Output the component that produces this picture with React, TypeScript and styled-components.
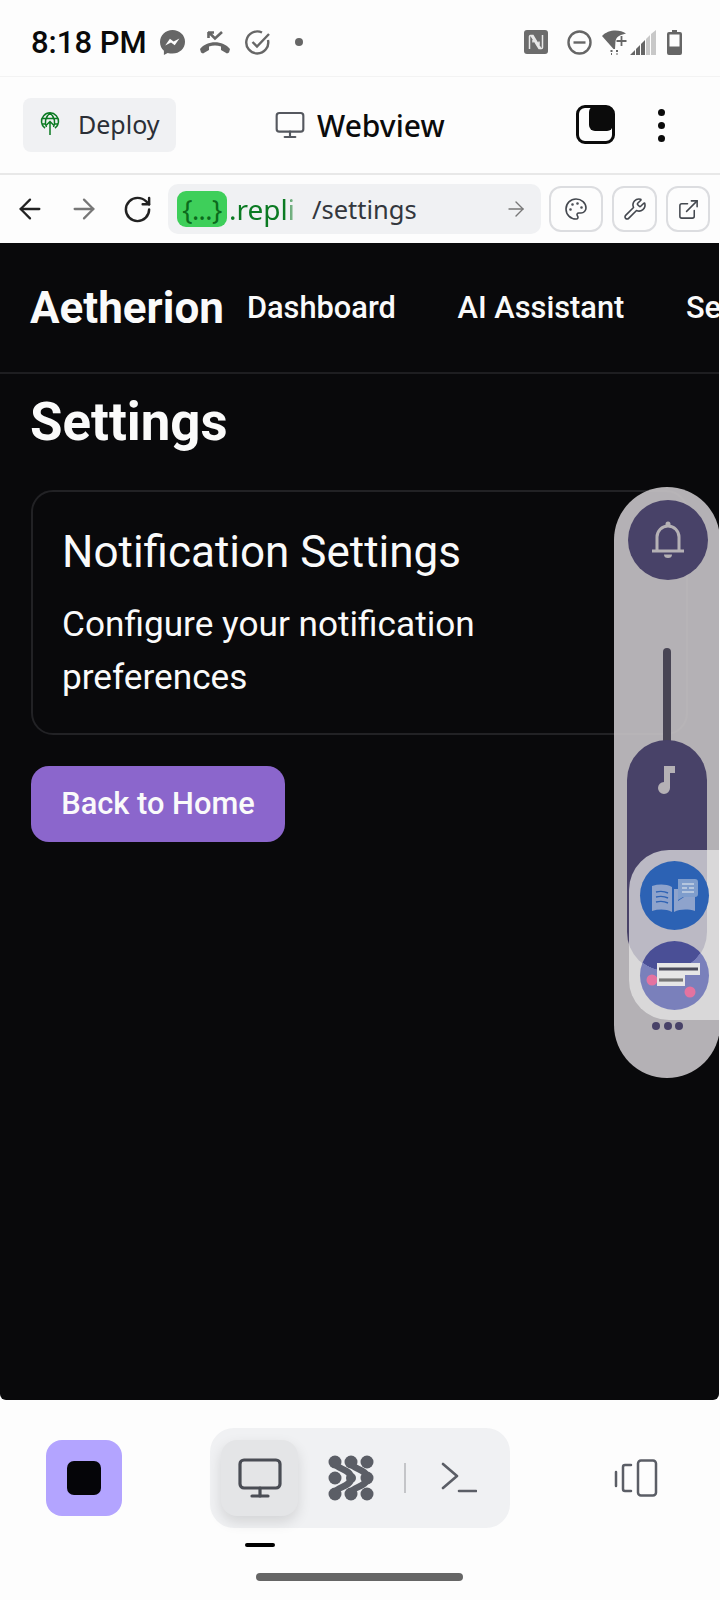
import * as React from "react";
import styled, { createGlobalStyle } from "styled-components";
import { ArrowLeft, ArrowRight, ExternalLink, Monitor, Palette, RotateCw, Wrench } from "lucide-react";

const GlobalStyle = createGlobalStyle`
  html, body { margin: 0; padding: 0; background: #fdfdfd; }
  * { box-sizing: border-box; }
`;

const Screen = styled.div`
  width: 720px;
  height: 1600px;
  display: flex;
  flex-direction: column;
  background: #fdfdfd;
  overflow: hidden;
  font-family: Roboto, "Liberation Sans", sans-serif;
`;

const StatusBar = styled.div`
  height: 77px;
  flex: none;
  display: flex;
  align-items: center;
  padding: 8px 38px 0 31px;
  border-bottom: 1px solid #f3f3f3;
`;

const Clock = styled.div`
  font: 500 31px Roboto, sans-serif;
  color: #0a0a0a;
  margin-right: 13px;
`;

const StatusGroup = styled.div`
  display: flex;
  align-items: center;
  gap: 15px;
`;

const StatusDot = styled.span`
  width: 8px;
  height: 8px;
  margin-left: 10px;
  border-radius: 50%;
  background: #666;
`;

const StatusSlot = styled.div<{ $left: number }>`
  display: flex;
  margin-left: ${(p) => p.$left}px;
`;

const Spacer = styled.div`
  flex: 1;
`;

const TitleBar = styled.div`
  height: 98px;
  flex: none;
  display: flex;
  align-items: center;
  padding: 0 55px 0 23px;
  border-bottom: 2px solid #e8e8e8;
`;

const DeployButton = styled.div`
  width: 153px;
  height: 54px;
  display: flex;
  align-items: center;
  gap: 18px;
  padding: 0 0 2px 17px;
  border-radius: 8px;
  background: #f0f1f3;
  font: 400 25px "Noto Sans", sans-serif;
  color: #2b2f36;
`;

const PageTitle = styled.div`
  display: flex;
  align-items: center;
  gap: 11px;
  margin-left: 98px;
  font: 500 30px "Noto Sans", sans-serif;
  color: #0b0b0b;
`;

const StackIcon = styled.div`
  position: relative;
  width: 37px;
  height: 38px;
  margin-right: 45px;

  &::before {
    content: "";
    position: absolute;
    left: 0;
    bottom: 0;
    width: 33px;
    height: 33px;
    border: 3px solid #0b0b0b;
    border-radius: 9px;
  }

  &::after {
    content: "";
    position: absolute;
    right: 0;
    top: 0;
    width: 24px;
    height: 25px;
    background: #0b0b0b;
    border-radius: 6px;
  }
`;

const KebabDots = styled.div`
  display: flex;
  flex-direction: column;
  gap: 6px;

  span {
    width: 7px;
    height: 7px;
    border-radius: 50%;
    background: #0b0b0b;
  }
`;

const UrlBar = styled.div`
  height: 68px;
  flex: none;
  display: flex;
  align-items: center;
  padding: 0 10px 0 14px;
`;

const NavIcons = styled.div`
  display: flex;
  align-items: center;
  gap: 22px;
  margin-right: 15px;
  flex: none;
`;

const UrlField = styled.div`
  width: 373px;
  height: 50px;
  flex: none;
  display: flex;
  align-items: center;
  padding: 0 13px 0 9px;
  border-radius: 10px;
  background: #f0f1f3;
  font: 400 25.500px "Noto Sans", sans-serif;
  color: #33373d;
`;

const ReplChip = styled.span`
  width: 50px;
  height: 36px;
  flex: none;
  display: flex;
  align-items: center;
  justify-content: center;
  border-radius: 9px;
  background: #3ecf5a;
  color: #0b6a1c;
  font-size: 27px;
  letter-spacing: -0.500px;
`;

const ReplHost = styled.span`
  width: 68px;
  flex: none;
  margin-left: 2px;
  overflow: hidden;
  color: #0b7a22;
  font-size: 28px;
  white-space: nowrap;
  mask-image: linear-gradient(to right, #000 85%, transparent);
`;

const UrlPath = styled.span`
  flex: 1;
  margin-left: 15px;
`;

const ToolRow = styled.div`
  display: flex;
  gap: 9px;
  margin-left: 8px;
`;

const ToolButton = styled.div<{ $width: number }>`
  width: ${(p) => p.$width}px;
  height: 46px;
  flex: none;
  display: flex;
  align-items: center;
  justify-content: center;
  border: 2px solid #dcdde0;
  border-radius: 12px;
  color: #44484f;
`;

const Webview = styled.div`
  position: relative;
  width: 719px;
  height: 1157px;
  flex: none;
  border-radius: 0 0 6px 6px;
  background: #09090b;
  color: #fafafa;
  overflow: hidden;
`;

const Header = styled.div`
  height: 131px;
  display: flex;
  align-items: center;
  padding-left: 30px;
  border-bottom: 2px solid #1e1e21;
  white-space: nowrap;
`;

const Logo = styled.div`
  font: 700 44px Roboto, sans-serif;
  margin-right: 23px;
`;

const NavLinks = styled.div`
  display: flex;
  gap: 61.600px;
  font: 500 30.800px Roboto, sans-serif;
`;

const Main = styled.div`
  padding: 15px 31px;
`;

const Heading = styled.h1`
  margin: 0 0 35px -1px;
  font: 700 52.800px/66px Roboto, sans-serif;
`;

const Card = styled.div`
  width: 657px;
  height: 245px;
  padding: 31px 29px;
  border: 2px solid #222225;
  border-radius: 22px;
`;

const CardTitle = styled.div`
  font: 400 44px/58px Roboto, sans-serif;
  margin-bottom: 17px;
`;

const CardText = styled.div`
  font: 400 35.200px/52.800px Roboto, sans-serif;
`;

const BackButton = styled.div`
  width: 254px;
  height: 76px;
  margin-top: 31px;
  display: flex;
  align-items: center;
  justify-content: center;
  padding-bottom: 2px;
  border-radius: 18px;
  background: #8b66cc;
  font: 500 30.800px Roboto, sans-serif;
`;

const FloatPill = styled.div`
  position: absolute;
  left: 614px;
  top: 244px;
  width: 106px;
  height: 591px;
  border-radius: 53px;
  background: rgba(200, 196, 200, 0.9);
`;

const BellCircle = styled.div`
  position: absolute;
  left: 14px;
  top: 13px;
  width: 80px;
  height: 80px;
  display: flex;
  align-items: center;
  justify-content: center;
  border-radius: 50%;
  background: #484268;
`;

const SliderTrack = styled.div`
  position: absolute;
  left: 49px;
  top: 161px;
  width: 8px;
  height: 110px;
  border-radius: 4px;
  background: #484554;
`;

const SliderThumb = styled.div`
  position: absolute;
  left: 13px;
  top: 253px;
  width: 80px;
  height: 232px;
  padding: 26px 4px 0 0;
  display: flex;
  justify-content: center;
  border-radius: 40px;
  background: #484268;
`;

const MoreDots = styled.div`
  position: absolute;
  left: 38px;
  top: 535px;
  display: flex;
  gap: 3.500px;

  span {
    width: 8px;
    height: 8px;
    border-radius: 50%;
    background: #484268;
  }
`;

const AppDrawer = styled.div`
  position: absolute;
  left: 629px;
  top: 607px;
  width: 91px;
  height: 170px;
  display: flex;
  flex-direction: column;
  gap: 11px;
  padding: 11px 0 0 11px;
  border-radius: 40px 0 0 40px;
  background: rgba(232, 232, 232, 0.72);
`;

const AppBubble = styled.div<{ $background: string }>`
  width: 69px;
  height: 69px;
  flex: none;
  display: flex;
  align-items: center;
  justify-content: center;
  border-radius: 50%;
  background: ${(p) => p.$background};
`;

const BottomBar = styled.div`
  flex: 1;
  display: flex;
  flex-direction: column;
  align-items: center;
`;

const DockRow = styled.div`
  width: 100%;
  display: flex;
  align-items: center;
  padding: 28px 62px 0 46px;
`;

const StopButton = styled.div`
  width: 76px;
  height: 76px;
  display: flex;
  align-items: center;
  justify-content: center;
  margin-right: 88px;
  border-radius: 16px;
  background: #b3a4ff;

  span {
    width: 34px;
    height: 34px;
    border-radius: 7px;
    background: #050508;
  }
`;

const ToolGroup = styled.div`
  width: 300px;
  height: 100px;
  display: flex;
  align-items: center;
  padding-left: 11px;
  border-radius: 24px;
  background: #f0f1f3;
  margin-right: 104px;
`;

const ActiveTile = styled.div`
  width: 77px;
  height: 76px;
  flex: none;
  display: flex;
  align-items: center;
  justify-content: center;
  margin-right: 29px;
  border-radius: 16px;
  background: #e4e5e7;
  color: #4a4d55;
  box-shadow: 0 6px 14px rgba(0, 0, 0, 0.12);
`;

const GroupDivider = styled.div`
  width: 2px;
  height: 30px;
  margin: 0 35px 0 29px;
  background: #c4c5c8;
`;

const TabMark = styled.div`
  width: 30px;
  height: 4px;
  margin: 15px 0 0 -201px;
  border-radius: 2px;
  background: #000;
`;

const HomeBar = styled.div`
  width: 207px;
  height: 8px;
  margin: 26px 0 0 -2px;
  border-radius: 4px;
  background: #666;
`;

const gray = "#666";

const MessengerIcon = () => (
  <svg width="25" height="25" viewBox="0 0 25 25">
    <path fill={gray} d="M12.500 0C5.500 0 0 5.100 0 12c0 3.600 1.500 6.700 3.900 8.800V25l3.800-2.100c1.500.4 3.100.7 4.800.7 7 0 12.500-5.100 12.500-11.800S19.500 0 12.500 0z" />
    <path fill="#fdfdfd" d="M5.200 15.600l4.700-6.800 3.700 2.800 5.800-3.100-4.700 6.800-3.700-2.800z" />
  </svg>
);

const MissedCallIcon = () => (
  <svg width="30" height="23" viewBox="0 0 30 23" fill="none">
    <path stroke={gray} strokeWidth="2.600" d="M9 1.500l6 6 7-6.500M8 1.500h6M8.500 1v6" />
    <path fill={gray} d="M0 18c7-9 23-9 30 0l-1 3.500-2 1-6-3.500v-3.500c-4-1.200-8-1.200-12 0V19l-6 3.500-2-1z" />
  </svg>
);

const CheckCircleIcon = () => (
  <svg width="25" height="25" viewBox="0 0 25 25" fill="none" stroke={gray} strokeWidth="2.400">
    <path d="M23 10a11 11 0 1 1-6-7.500" />
    <path d="M7.500 12l4.500 4.500L24 4" />
  </svg>
);

const NfcIcon = () => (
  <svg width="24" height="24" viewBox="0 0 24 24">
    <rect width="24" height="24" rx="3" fill="#6c6c6c" />
    <path fill="none" stroke="#e8e8e8" strokeWidth="1.500" d="M5.500 19V6.500a1 1 0 0 1 1-1h2.500l8 13.500M9 5.500v7M18.500 5v12.500a1 1 0 0 1-1 1H15l-8-13M15 18.500v-7" />
  </svg>
);

const DndIcon = () => (
  <svg width="25" height="25" viewBox="0 0 25 25" fill="none" stroke={gray} strokeWidth="2.400">
    <circle cx="12.500" cy="12.500" r="11" />
    <path d="M6.500 12.500h12" />
  </svg>
);

const WifiIcon = () => (
  <svg width="25" height="25" viewBox="0 0 25 25">
    <path fill={gray} d="M0 6C6-1 18-1 24 3.500L19 5c-3 1-5 3-5.500 6L13 19h-1.500z" />
    <path stroke={gray} strokeWidth="1.800" d="M19.500 6v10M14.500 11h10" />
    <path fill={gray} d="M8.500 20h2v2h-2zM14 20h2v2h-2zM9 23h1v2H9zM14.500 23h1v2h-1z" />
  </svg>
);

const SignalIcon = () => (
  <svg width="27" height="25" viewBox="0 0 27 25">
    <path fill={gray} d="M0 25l5-5v5zM6 19l4-4v10H6zM11 14l4-4v15h-4z" />
    <path fill="#c8c8c8" d="M16 9l4-4v20h-4zM21 4l5-4v25h-5z" />
  </svg>
);

const BatteryIcon = () => (
  <svg width="15" height="25" viewBox="0 0 15 25">
    <path fill={gray} d="M5 0h5v2h3a2 2 0 0 1 2 2v19a2 2 0 0 1-2 2H2a2 2 0 0 1-2-2V4a2 2 0 0 1 2-2h3z" />
    <rect x="2.500" y="4.500" width="10" height="12" fill="#fdfdfd" />
  </svg>
);

const DeployIcon = () => (
  <svg width="20" height="24" viewBox="0 0 20 24" fill="none" stroke="#0b7a22" strokeWidth="1.500">
    <path d="M5 16.200A8.500 8.500 0 1 1 15 16.200" />
    <path d="M1.800 6.500h16.400M1.800 12h3.200M15 12h3.200M10 1c-5 4-5.500 10-3.500 14M10 1c5 4 5.500 10 3.500 14M10 23V9.500M6 13.500l4-4 4 4" />
  </svg>
);

const BellIcon = () => (
  <svg width="34" height="38" viewBox="0 0 34 38" fill="#b5b1b5">
    <circle cx="17" cy="3" r="2.500" />
    <path fill="none" stroke="#b5b1b5" strokeWidth="3" d="M6 30V16a11 11 0 0 1 22 0v14" />
    <rect x="1" y="28.500" width="32" height="3" />
    <path d="M13 33.500h8a4 3.500 0 0 1-8 0z" />
  </svg>
);

const MusicIcon = () => (
  <svg width="20" height="28" viewBox="0 0 20 28">
    <path fill="#b5b1b5" d="M9 0h11v7h-5v15a6 6 0 1 1-6-6z" />
  </svg>
);

const BookIcon = () => (
  <svg width="46" height="34" viewBox="0 0 46 34">
    <path fill="#8ea3cc" d="M0 7c7-2 14-2 20 1v25c-6-3-13-3-20-1zM22 10v23c6-3 14-3 21-1V18H32l-6 4v-12z" />
    <path fill="none" stroke="#2f63b4" strokeWidth="1.400" d="M4 13c4-1 8-1 12 1M4 18c4-1 8-1 12 1M4 23c4-1 8-1 12 1" />
    <path fill="#7f9dcc" d="M26 0h17a3 3 0 0 1 3 3v12a3 3 0 0 1-3 3H31l-5 3z" />
    <path stroke="#c8d3e4" strokeWidth="1.600" d="M30 5h12M30 9h5M37 9h5M30 13h12" />
  </svg>
);

const ChatCardsIcon = () => (
  <svg width="58" height="44" viewBox="0 0 58 44">
    <circle cx="6" cy="26" r="5.500" fill="#e473a0" />
    <path fill="#e6e6e6" d="M11 9h43v12H39v11H11z" />
    <circle cx="44" cy="38" r="5.500" fill="#e473a0" />
    <path stroke="#4a4a5a" strokeWidth="3.200" d="M13 15h39" />
    <path stroke="#777" strokeWidth="3.200" d="M13 26h24" />
  </svg>
);

const ClusterIcon = () => (
  <svg width="48" height="48" viewBox="0 0 48 48" fill="#5b5e66">
    <circle cx="8" cy="8" r="6.500" />
    <circle cx="24" cy="8" r="6.500" />
    <circle cx="40" cy="8" r="6.500" />
    <circle cx="8" cy="24" r="6.500" />
    <circle cx="40" cy="24" r="6.500" />
    <circle cx="8" cy="40" r="6.500" />
    <circle cx="24" cy="40" r="6.500" />
    <circle cx="40" cy="40" r="6.500" />
    <circle cx="24" cy="24" r="5" />
    <path fill="none" stroke="#5b5e66" strokeWidth="6.500" d="M8 8C8 16 24 14 24 24M24 8C24 16 40 14 40 24M8 40C8 32 24 34 24 24M24 40C24 32 40 34 40 24" />
  </svg>
);

const TerminalIcon = () => (
  <svg width="36" height="32" viewBox="0 0 36 32" fill="none" stroke="#5b5e66" strokeWidth="2.600" strokeLinecap="round" strokeLinejoin="round">
    <path d="M2 2l14 12L2 26M18 29h17" />
  </svg>
);

const DevicesIcon = () => (
  <svg width="44" height="38" viewBox="0 0 44 38" fill="none" stroke="#5b5e66" strokeWidth="2.500" strokeLinecap="round" strokeLinejoin="round">
    <rect x="24" y="1.500" width="18" height="35" rx="3" />
    <path d="M17 6h-6a2 2 0 0 0-2 2v22a2 2 0 0 0 2 2h6M2 13v14" />
  </svg>
);

// capsule of the slider shows through the lower bubble
const lowerBubble = "radial-gradient(circle 40px at 27px -10px, #4a4f96 99%, #7a80bb 100%)";

export default function App() {
  return (
    <Screen>
      <GlobalStyle />
      <StatusBar>
        <Clock>8:18 PM</Clock>
        <StatusGroup>
          <MessengerIcon />
          <MissedCallIcon />
          <CheckCircleIcon />
          <StatusDot />
        </StatusGroup>
        <Spacer />
        <NfcIcon />
        <StatusSlot $left={19}>
          <DndIcon />
        </StatusSlot>
        <StatusSlot $left={10}>
          <WifiIcon />
        </StatusSlot>
        <StatusSlot $left={3}>
          <SignalIcon />
        </StatusSlot>
        <StatusSlot $left={10}>
          <BatteryIcon />
        </StatusSlot>
      </StatusBar>
      <TitleBar>
        <DeployButton>
          <DeployIcon />
          Deploy
        </DeployButton>
        <PageTitle>
          <Monitor size={32} strokeWidth={1.6} color="#55585f" />
          Webview
        </PageTitle>
        <Spacer />
        <StackIcon />
        <KebabDots>
          <span />
          <span />
          <span />
        </KebabDots>
      </TitleBar>
      <UrlBar>
        <NavIcons>
          <ArrowLeft size={32} strokeWidth={1.7} color="#222" />
          <ArrowRight size={32} strokeWidth={1.7} color="#777" />
          <RotateCw size={31} strokeWidth={1.9} color="#222" />
        </NavIcons>
        <UrlField>
          <ReplChip>{"{...}"}</ReplChip>
          <ReplHost>.repli</ReplHost>
          <UrlPath>/settings</UrlPath>
          <ArrowRight size={24} strokeWidth={1.4} color="#777" />
        </UrlField>
        <ToolRow>
          <ToolButton $width={54}>
            <Palette size={24} strokeWidth={1.6} />
          </ToolButton>
          <ToolButton $width={45}>
            <Wrench size={24} strokeWidth={1.6} />
          </ToolButton>
          <ToolButton $width={44}>
            <ExternalLink size={23} strokeWidth={1.6} />
          </ToolButton>
        </ToolRow>
      </UrlBar>
      <Webview>
        <Header>
          <Logo>Aetherion</Logo>
          <NavLinks>
            <span>Dashboard</span>
            <span>AI Assistant</span>
            <span>Settings</span>
          </NavLinks>
        </Header>
        <Main>
          <Heading>Settings</Heading>
          <Card>
            <CardTitle>Notification Settings</CardTitle>
            <CardText>
              Configure your notification
              <br />
              preferences
            </CardText>
          </Card>
          <BackButton>Back to Home</BackButton>
        </Main>
        <FloatPill>
          <BellCircle>
            <BellIcon />
          </BellCircle>
          <SliderTrack />
          <SliderThumb>
            <MusicIcon />
          </SliderThumb>
          <MoreDots>
            <span />
            <span />
            <span />
          </MoreDots>
        </FloatPill>
        <AppDrawer>
          <AppBubble $background="#2c62b4">
            <BookIcon />
          </AppBubble>
          <AppBubble $background={lowerBubble}>
            <ChatCardsIcon />
          </AppBubble>
        </AppDrawer>
      </Webview>
      <BottomBar>
        <DockRow>
          <StopButton>
            <span />
          </StopButton>
          <ToolGroup>
            <ActiveTile>
              <Monitor size={48} strokeWidth={1.6} />
            </ActiveTile>
            <ClusterIcon />
            <GroupDivider />
            <TerminalIcon />
          </ToolGroup>
          <DevicesIcon />
        </DockRow>
        <TabMark />
        <HomeBar />
      </BottomBar>
    </Screen>
  );
}
